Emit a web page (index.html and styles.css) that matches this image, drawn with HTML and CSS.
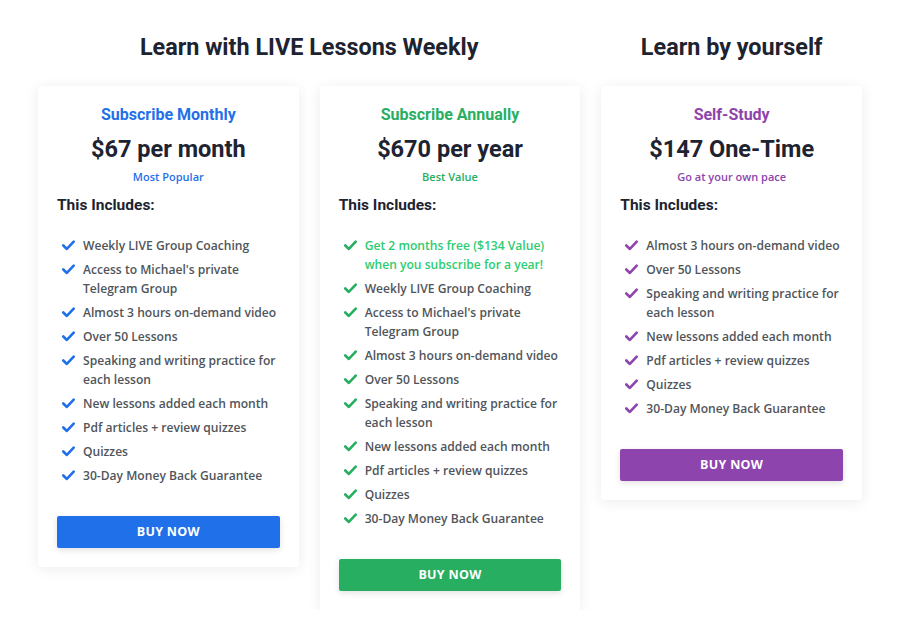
FILE: index.html
```html
<!DOCTYPE html>
<html>
<head>
<meta charset="utf-8">
<link rel="stylesheet" href="styles.css">
</head>
<body>
<div class="pricing">
  <h2 class="group-title span2">Learn with LIVE Lessons Weekly</h2>
  <h2 class="group-title">Learn by yourself</h2>

  <div class="card blue">
    <h3 class="plan">Subscribe Monthly</h3>
    <div class="price">$67 per month</div>
    <div class="tag">Most Popular</div>
    <h4 class="includes">This Includes:</h4>
    <ul class="features">
      <li><svg class="chk" viewBox="0 0 12 10"><polyline points="1.2,5 4.5,8.2 10.8,1.5"/></svg><span>Weekly LIVE Group Coaching</span></li>
      <li><svg class="chk" viewBox="0 0 12 10"><polyline points="1.2,5 4.5,8.2 10.8,1.5"/></svg><span>Access to Michael's private Telegram Group</span></li>
      <li><svg class="chk" viewBox="0 0 12 10"><polyline points="1.2,5 4.5,8.2 10.8,1.5"/></svg><span>Almost 3 hours on-demand video</span></li>
      <li><svg class="chk" viewBox="0 0 12 10"><polyline points="1.2,5 4.5,8.2 10.8,1.5"/></svg><span>Over 50 Lessons</span></li>
      <li><svg class="chk" viewBox="0 0 12 10"><polyline points="1.2,5 4.5,8.2 10.8,1.5"/></svg><span>Speaking and writing practice for each lesson</span></li>
      <li><svg class="chk" viewBox="0 0 12 10"><polyline points="1.2,5 4.5,8.2 10.8,1.5"/></svg><span>New lessons added each month</span></li>
      <li><svg class="chk" viewBox="0 0 12 10"><polyline points="1.2,5 4.5,8.2 10.8,1.5"/></svg><span>Pdf articles + review quizzes</span></li>
      <li><svg class="chk" viewBox="0 0 12 10"><polyline points="1.2,5 4.5,8.2 10.8,1.5"/></svg><span>Quizzes</span></li>
      <li><svg class="chk" viewBox="0 0 12 10"><polyline points="1.2,5 4.5,8.2 10.8,1.5"/></svg><span>30-Day Money Back Guarantee</span></li>
    </ul>
    <a class="buy" href="#">BUY NOW</a>
  </div>

  <div class="card green">
    <h3 class="plan">Subscribe Annually</h3>
    <div class="price">$670 per year</div>
    <div class="tag">Best Value</div>
    <h4 class="includes">This Includes:</h4>
    <ul class="features">
      <li class="highlight"><svg class="chk" viewBox="0 0 12 10"><polyline points="1.2,5 4.5,8.2 10.8,1.5"/></svg><span>Get 2 months free ($134 Value) when you subscribe for a year!</span></li>
      <li><svg class="chk" viewBox="0 0 12 10"><polyline points="1.2,5 4.5,8.2 10.8,1.5"/></svg><span>Weekly LIVE Group Coaching</span></li>
      <li><svg class="chk" viewBox="0 0 12 10"><polyline points="1.2,5 4.5,8.2 10.8,1.5"/></svg><span>Access to Michael's private Telegram Group</span></li>
      <li><svg class="chk" viewBox="0 0 12 10"><polyline points="1.2,5 4.5,8.2 10.8,1.5"/></svg><span>Almost 3 hours on-demand video</span></li>
      <li><svg class="chk" viewBox="0 0 12 10"><polyline points="1.2,5 4.5,8.2 10.8,1.5"/></svg><span>Over 50 Lessons</span></li>
      <li><svg class="chk" viewBox="0 0 12 10"><polyline points="1.2,5 4.5,8.2 10.8,1.5"/></svg><span>Speaking and writing practice for each lesson</span></li>
      <li><svg class="chk" viewBox="0 0 12 10"><polyline points="1.2,5 4.5,8.2 10.8,1.5"/></svg><span>New lessons added each month</span></li>
      <li><svg class="chk" viewBox="0 0 12 10"><polyline points="1.2,5 4.5,8.2 10.8,1.5"/></svg><span>Pdf articles + review quizzes</span></li>
      <li><svg class="chk" viewBox="0 0 12 10"><polyline points="1.2,5 4.5,8.2 10.8,1.5"/></svg><span>Quizzes</span></li>
      <li><svg class="chk" viewBox="0 0 12 10"><polyline points="1.2,5 4.5,8.2 10.8,1.5"/></svg><span>30-Day Money Back Guarantee</span></li>
    </ul>
    <a class="buy" href="#">BUY NOW</a>
  </div>

  <div class="card purple">
    <h3 class="plan">Self-Study</h3>
    <div class="price">$147 One-Time</div>
    <div class="tag">Go at your own pace</div>
    <h4 class="includes">This Includes:</h4>
    <ul class="features">
      <li><svg class="chk" viewBox="0 0 12 10"><polyline points="1.2,5 4.5,8.2 10.8,1.5"/></svg><span>Almost 3 hours on-demand video</span></li>
      <li><svg class="chk" viewBox="0 0 12 10"><polyline points="1.2,5 4.5,8.2 10.8,1.5"/></svg><span>Over 50 Lessons</span></li>
      <li><svg class="chk" viewBox="0 0 12 10"><polyline points="1.2,5 4.5,8.2 10.8,1.5"/></svg><span>Speaking and writing practice for each lesson</span></li>
      <li><svg class="chk" viewBox="0 0 12 10"><polyline points="1.2,5 4.5,8.2 10.8,1.5"/></svg><span>New lessons added each month</span></li>
      <li><svg class="chk" viewBox="0 0 12 10"><polyline points="1.2,5 4.5,8.2 10.8,1.5"/></svg><span>Pdf articles + review quizzes</span></li>
      <li><svg class="chk" viewBox="0 0 12 10"><polyline points="1.2,5 4.5,8.2 10.8,1.5"/></svg><span>Quizzes</span></li>
      <li><svg class="chk" viewBox="0 0 12 10"><polyline points="1.2,5 4.5,8.2 10.8,1.5"/></svg><span>30-Day Money Back Guarantee</span></li>
    </ul>
    <a class="buy" href="#">BUY NOW</a>
  </div>
</div>
</body>
</html>
```

FILE: styles.css
```css
* { box-sizing: border-box; }
html, body { margin: 0; padding: 0; background: #fff; }
body {
  font-family: "Open Sans", "Noto Sans", sans-serif;
  color: #50555b;
}
.pricing {
  width: 824px;
  margin: 0 auto;
  padding-top: 31px;
  display: grid;
  grid-template-columns: repeat(3, 1fr);
  column-gap: 21px;
  align-items: start;
}
.group-title {
  margin: 0 0 23px;
  text-align: center;
  font-family: Roboto, sans-serif;
  font-weight: 700;
  font-size: 23.4px;
  line-height: 32px;
  color: #1d2330;
}
.span2 { grid-column: span 2; }
.card {
  background: #fff;
  box-shadow: 0 2px 14px rgba(0, 0, 0, 0.08);
  border-radius: 3px;
  padding: 17px 19px 19px;
  display: flex;
  flex-direction: column;
}
.plan {
  margin: 0;
  text-align: center;
  font-family: Roboto, sans-serif;
  font-weight: 700;
  font-size: 16px;
  line-height: 24px;
}
.price {
  margin-top: 6px;
  text-align: center;
  font-family: Roboto, sans-serif;
  font-weight: 700;
  font-size: 23.5px;
  line-height: 32px;
  color: #1d2330;
}
.tag {
  margin-top: 4px;
  text-align: center;
  font-size: 11px;
  font-weight: 600;
  line-height: 16px;
}
.includes {
  margin: 8px 0 0;
  font-family: Roboto, sans-serif;
  font-weight: 700;
  font-size: 15.5px;
  line-height: 24px;
  color: #1d2330;
}
.features {
  list-style: none;
  margin: 19px 0 0;
  padding: 0;
  display: flex;
  flex-direction: column;
  gap: 5px;
}
.features li {
  display: flex;
  align-items: flex-start;
  font-size: 12.1px;
  font-weight: 600;
  line-height: 19px;
  color: #50555b;
}
.chk {
  flex: none;
  width: 13px;
  height: 11px;
  margin: 4px 8px 0 5px;
  fill: none;
  stroke-width: 2.4;
  stroke-linecap: round;
  stroke-linejoin: round;
}
.buy {
  display: block;
  margin-top: 31px;
  height: 32px;
  line-height: 32px;
  text-align: center;
  color: #fff;
  text-decoration: none;
  font-size: 12.5px;
  font-weight: 700;
  letter-spacing: 0.3px;
  border-radius: 2px;
  box-shadow: 0 2px 6px rgba(0, 0, 0, 0.12);
}
.blue .plan, .blue .tag { color: #1f70e9; }
.blue .chk { stroke: #1f70e9; }
.blue .buy { background: #1f70e9; }
.green .plan, .green .tag { color: #27ae60; }
.green .chk { stroke: #27ae60; }
.green .buy { background: #27ae60; }
.green .highlight { color: #2ecc71; }
.purple .plan, .purple .tag { color: #8e44ad; }
.purple .chk { stroke: #8e44ad; }
.purple .buy { background: #8e44ad; }
```
